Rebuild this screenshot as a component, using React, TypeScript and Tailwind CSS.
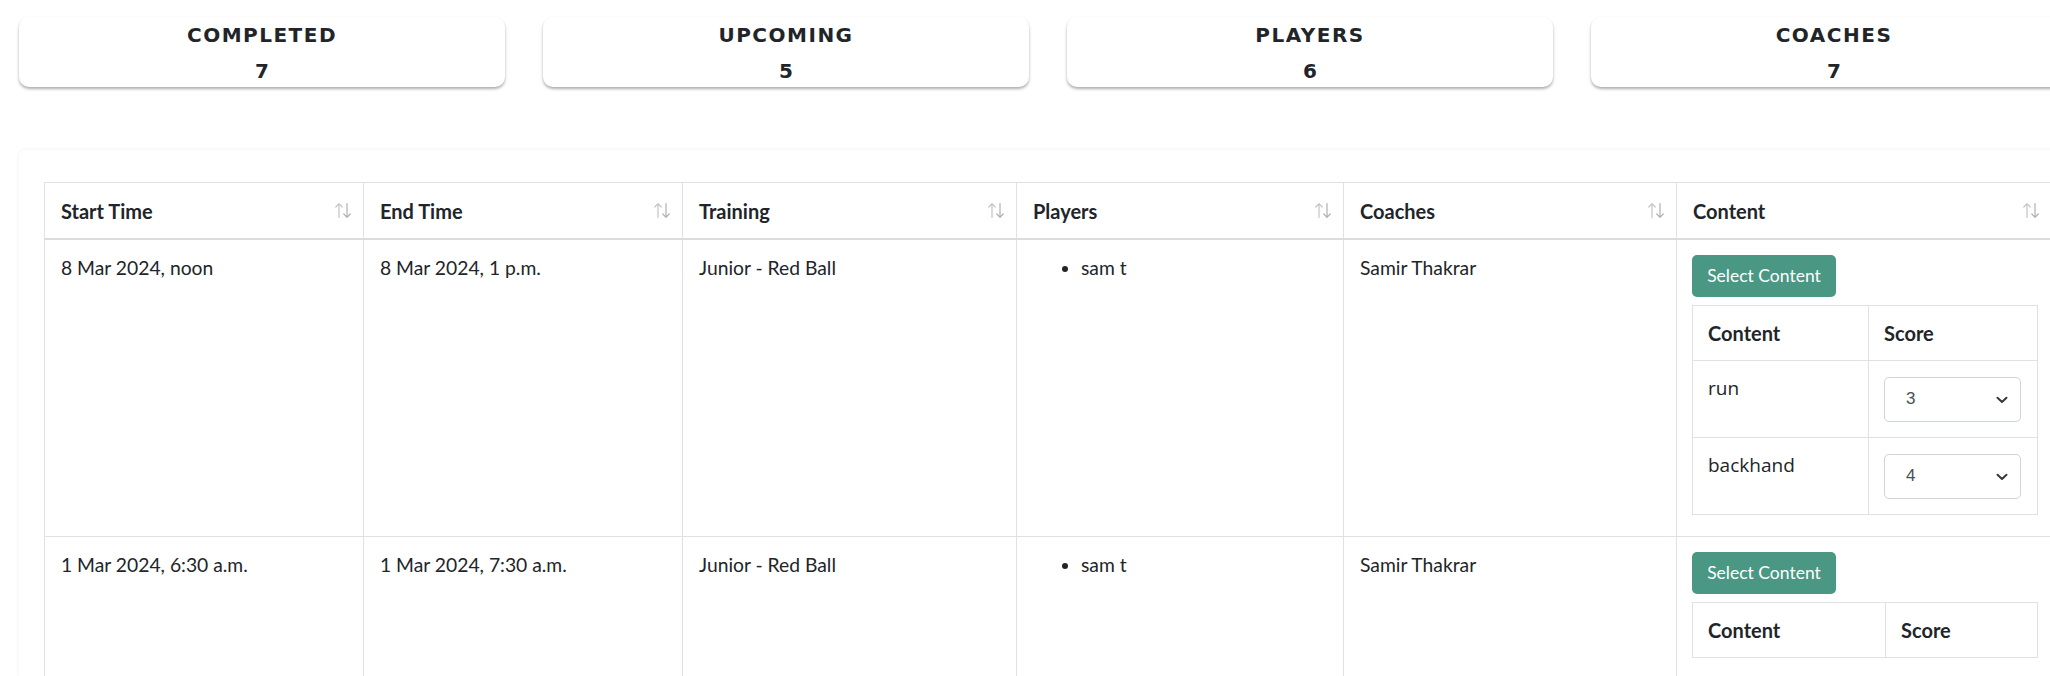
import React from "react";

const SortIcon = () => (
  <svg width="18" height="17" viewBox="0 0 18 17" fill="none" className="shrink-0">
    <path d="M5 15.5V1.8M1.8 5L5 1.6L8.2 5" stroke="#c4c4c4" strokeWidth="1.2" strokeLinecap="round" strokeLinejoin="round" />
    <path d="M13 1.5V15.2M9.8 12L13 15.4L16.2 12" stroke="#b0b0b0" strokeWidth="1.2" strokeLinecap="round" strokeLinejoin="round" />
  </svg>
);

const Chevron = () => (
  <svg width="12" height="8" viewBox="0 0 12 8" fill="none">
    <path d="M1.5 1.8L6 6L10.5 1.8" stroke="#343a40" strokeWidth="2" strokeLinecap="round" strokeLinejoin="round" />
  </svg>
);

const stats = [
  { label: "COMPLETED", value: 7 },
  { label: "UPCOMING", value: 5 },
  { label: "PLAYERS", value: 6 },
  { label: "COACHES", value: 7 },
];

const ScoreSelect = ({ value }: { value: string }) => (
  <div className="relative w-[137px] h-[45px]">
    <select
      defaultValue={value}
      className="appearance-none w-full h-full rounded-[5px] border border-[#ced4da] bg-white pl-[21px] text-[17px] text-[#495057] outline-none"
      style={{ fontFamily: '"Liberation Sans", Arial, sans-serif' }}
    >
      {["1", "2", "3", "4", "5"].map((v) => (
        <option key={v} value={v}>
          {v}
        </option>
      ))}
    </select>
    <span className="pointer-events-none absolute right-[13px] top-[19px] flex">
      <Chevron />
    </span>
  </div>
);

const SelectButton = () => (
  <button className="h-[42px] w-[144px] rounded-[5px] bg-[#4a9784] text-white text-[17.5px] leading-none">
    Select Content
  </button>
);

type Row = {
  start: string;
  end: string;
  training: string;
  players: string[];
  coach: string;
  contents: { name: string; score: string }[];
  inner: [number, number];
};

const rows: Row[] = [
  {
    start: "8 Mar 2024, noon",
    end: "8 Mar 2024, 1 p.m.",
    training: "Junior - Red Ball",
    players: ["sam t"],
    coach: "Samir Thakrar",
    contents: [
      { name: "run", score: "3" },
      { name: "backhand", score: "4" },
    ],
    inner: [176, 169],
  },
  {
    start: "1 Mar 2024, 6:30 a.m.",
    end: "1 Mar 2024, 7:30 a.m.",
    training: "Junior - Red Ball",
    players: ["sam t"],
    coach: "Samir Thakrar",
    contents: [],
    inner: [193, 152],
  },
];

const headers = ["Start Time", "End Time", "Training", "Players", "Coaches", "Content"];
const colWidths = ["w-[319px]", "w-[319px]", "w-[334px]", "w-[327px]", "w-[333px]", "w-[375px]"];

export default function App() {
  return (
    <div
      className="w-[2050px] h-[676px] overflow-hidden bg-white text-[#212529]"
      style={{ fontFamily: 'Lato, "Open Sans", sans-serif' }}
    >
      <div className="w-[2095px] pl-[19px] pr-[19px] pt-[17px]">
        <div className="flex gap-[38px]">
          {stats.map((s) => (
            <div
              key={s.label}
              className="w-[486px] h-[70px] shrink-0 rounded-[10px] bg-white shadow-[0_2px_3px_rgba(0,0,0,0.32)] flex flex-col items-center pt-[6px]"
              style={{ fontFamily: '"DejaVu Sans", sans-serif' }}
            >
              <div className="text-[20px] leading-[25px] font-bold tracking-[1.5px] text-[#212529]">{s.label}</div>
              <div className="mt-[11px] text-[20px] leading-[24px] font-bold text-[#212529]">{s.value}</div>
            </div>
          ))}
        </div>

        <div className="mt-[63px] rounded-[6px] bg-white shadow-[0_0_4px_rgba(0,0,0,0.07)] pt-[32px] px-[25px]">
          <table className="table-fixed border-collapse w-[2007px]">
            <colgroup>
              {colWidths.map((w, i) => (
                <col key={i} className={w} />
              ))}
            </colgroup>
            <thead>
              <tr>
                {headers.map((h) => (
                  <th
                    key={h}
                    className="border border-[#dee2e6] border-b-2 border-b-[#dcdcdc] h-[56px] pl-[16px] pr-[11px] text-left align-middle"
                  >
                    <div className="flex items-center justify-between text-[20px] font-bold leading-[28px]">
                      <span className="translate-y-[1px]">{h}</span>
                      <SortIcon />
                    </div>
                  </th>
                ))}
              </tr>
            </thead>
            <tbody>
              {rows.map((r, ri) => (
                <tr key={ri} className="text-[19.3px] leading-[28px]">
                  <td className="border border-[#dee2e6] align-top px-[16px] pt-[14px]">{r.start}</td>
                  <td className="border border-[#dee2e6] align-top px-[16px] pt-[14px]">{r.end}</td>
                  <td className="border border-[#dee2e6] align-top px-[16px] pt-[14px]">{r.training}</td>
                  <td className="border border-[#dee2e6] align-top px-[16px] pt-[14px]">
                    <ul className="list-disc pl-[48px]">
                      {r.players.map((p) => (
                        <li key={p}>{p}</li>
                      ))}
                    </ul>
                  </td>
                  <td className="border border-[#dee2e6] align-top px-[16px] pt-[14px]">{r.coach}</td>
                  <td className="border border-[#dee2e6] align-top pl-[15px] pr-[15px] pt-[15px] pb-[16px]">
                    <SelectButton />
                    <table className="mt-[8px] mb-[5px] border-collapse w-[345px] table-fixed">
                      <colgroup>
                        <col style={{ width: r.inner[0] }} />
                        <col style={{ width: r.inner[1] }} />
                      </colgroup>
                      <thead>
                        <tr>
                          <th className="border border-[#dee2e6] h-[55px] pl-[15px] text-left font-bold text-[20px]">Content</th>
                          <th className="border border-[#dee2e6] h-[55px] pl-[15px] text-left font-bold text-[20px]">Score</th>
                        </tr>
                      </thead>
                      <tbody>
                        {r.contents.map((c) => (
                          <tr key={c.name}>
                            <td
                              className="border border-[#dee2e6] align-top pl-[15px] pt-[13px] h-[77px] text-[19px]"
                              style={{ fontFamily: '"Open Sans", Lato, sans-serif' }}
                            >
                              {c.name}
                            </td>
                            <td className="border border-[#dee2e6] align-top pl-[15px] pt-[16px] pb-[15px]">
                              <ScoreSelect value={c.score} />
                            </td>
                          </tr>
                        ))}
                      </tbody>
                    </table>
                  </td>
                </tr>
              ))}
            </tbody>
          </table>
        </div>
      </div>
    </div>
  );
}
